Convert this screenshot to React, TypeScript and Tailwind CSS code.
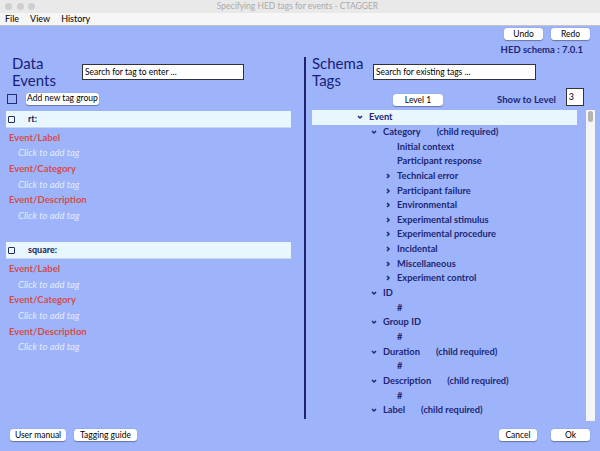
import React from "react";

type Node = { label: string; level: number; chevron?: "down" | "right"; note?: string; active?: boolean };

const tree: Node[] = [
  { label: "Event", level: 1, chevron: "down", active: true },
  { label: "Category", level: 2, chevron: "down", note: "(child required)" },
  { label: "Initial context", level: 3 },
  { label: "Participant response", level: 3 },
  { label: "Technical error", level: 3, chevron: "right" },
  { label: "Participant failure", level: 3, chevron: "right" },
  { label: "Environmental", level: 3, chevron: "right" },
  { label: "Experimental stimulus", level: 3, chevron: "right" },
  { label: "Experimental procedure", level: 3, chevron: "right" },
  { label: "Incidental", level: 3, chevron: "right" },
  { label: "Miscellaneous", level: 3, chevron: "right" },
  { label: "Experiment control", level: 3, chevron: "right" },
  { label: "ID", level: 2, chevron: "down" },
  { label: "#", level: 3 },
  { label: "Group ID", level: 2, chevron: "down" },
  { label: "#", level: 3 },
  { label: "Duration", level: 2, chevron: "down", note: "(child required)" },
  { label: "#", level: 3 },
  { label: "Description", level: 2, chevron: "down", note: "(child required)" },
  { label: "#", level: 3 },
  { label: "Label", level: 2, chevron: "down", note: "(child required)" },
];

const indent = ["pl-[45px]", "pl-[59px]", "pl-[73px]"];

function Chevron({ dir }: { dir: "down" | "right" }) {
  return (
    <svg width="6" height="6" viewBox="0 0 6 6" className="block">
      {dir === "down" ? (
        <polyline points="1,2 3,4 5,2" fill="none" stroke="#1e2675" strokeWidth="1.5" />
      ) : (
        <polyline points="2,1 4,3 2,5" fill="none" stroke="#1e2675" strokeWidth="1.5" />
      )}
    </svg>
  );
}

function MacButton({ label, className = "" }: { label: string; className?: string }) {
  return (
    <div
      className={`h-[12px] bg-white rounded-[3px] shadow-[0_0.5px_1px_rgba(0,0,0,0.35)] flex items-center justify-center text-[8.5px] text-black leading-none ${className}`}
    >
      {label}
    </div>
  );
}

function TagGroup({ name }: { name: string }) {
  const tags = ["Event/Label", "Event/Category", "Event/Description"];
  return (
    <div>
      <div className="ml-[6px] w-[285px] h-[17px] bg-[#e8f6fe] border-b border-[#c9d6f2] flex items-center">
        <div className="ml-[2px] w-[7px] h-[7px] border border-[#222a60] rounded-[1px] bg-white/40" />
        <span className="ml-[13px] text-[9px] font-bold text-[#141a50]">{name}</span>
      </div>
      <div className="mt-[2px]">
        {tags.map((t) => (
          <div key={t}>
            <div className="h-[15.7px] flex items-center pl-[9px] text-[9.5px] font-bold text-[#d44c4c]">{t}</div>
            <div className="h-[15.7px] flex items-center pl-[18px] text-[9.5px] italic text-[#e4eafa]">Click to add tag</div>
          </div>
        ))}
      </div>
    </div>
  );
}

export default function App() {
  return (
    <div className="w-[600px] h-[451px] flex flex-col overflow-hidden font-[family-name:Lato,sans-serif] bg-[#9db4fa]">
      {/* window title bar */}
      <div className="h-[13px] bg-[#e9e9e9] flex items-center">
        <div className="flex gap-[4.5px] ml-[5px]">
          <div className="w-[7px] h-[7px] rounded-full bg-[#cfcfcf]" />
          <div className="w-[7px] h-[7px] rounded-full bg-[#cfcfcf]" />
          <div className="w-[7px] h-[7px] rounded-full bg-[#cfcfcf]" />
        </div>
        <div className="flex-1 text-center text-[8.5px] text-[#a9a9a9] pr-[40px]">Specifying HED tags for events - CTAGGER</div>
      </div>
      {/* menu bar */}
      <div className="h-[13px] bg-[#f6f6f6] border-b border-[#c4c4c4] flex items-center text-[9px] text-black gap-[11px] pl-[5px]">
        <span>File</span>
        <span>View</span>
        <span>History</span>
      </div>

      <div className="flex-1 flex flex-col">
        <div className="h-[15px] pt-[2px] flex justify-end gap-[8px] pr-[10px]">
          <MacButton label="Undo" className="w-[39px]" />
          <MacButton label="Redo" className="w-[39px]" />
        </div>
        <div className="h-[14px] flex items-end justify-end pr-[17px] text-[9.5px] leading-[10px] font-bold text-[#1e2675]">
          HED schema : 7.0.1
        </div>

        <div className="h-[366px] flex">
          {/* left: data events */}
          <div className="w-[304px] flex flex-col">
            <div className="h-[37px] flex">
              <div className="w-[82px] pl-[12px] text-[15px] leading-[17px] text-[#1a2078]">
                <div>Data</div>
                <div>Events</div>
              </div>
              <div className="mt-[9px] w-[162px] h-[16px] bg-white border border-[#333] flex items-center pl-[2px] text-[8.5px] text-black">
                Search for tag to enter ...
              </div>
            </div>
            <div className="h-[13px] flex items-center">
              <div className="ml-[7px] w-[10px] h-[10px] border border-[#222a70]" />
              <MacButton label="Add new tag group" className="ml-[9px] w-[73px]" />
            </div>
            <div className="mt-[6px] flex flex-col gap-[18px]">
              <TagGroup name="rt:" />
              <TagGroup name="square:" />
            </div>
          </div>

          <div className="w-[2px] my-[2px] bg-[#1c2370]" />

          {/* right: schema tags */}
          <div className="flex-1 pl-[6px] flex flex-col">
            <div className="h-[33px] flex">
              <div className="w-[61px] text-[15px] leading-[17px] text-[#1a2078]">
                <div>Schema</div>
                <div>Tags</div>
              </div>
              <div className="mt-[9px] w-[163px] h-[16px] bg-white border border-[#333] flex items-center pl-[2px] text-[8.5px] text-black">
                Search for existing tags ...
              </div>
            </div>
            <div className="h-[19px] flex items-start">
              <MacButton label="Level 1" className="ml-[81px] mt-[6px] w-[50px]" />
              <span className="ml-[54px] mt-[5px] text-[9.5px] font-bold text-[#1e2675]">Show to Level</span>
              <div className="ml-[10px] w-[18px] h-[18px] bg-white border border-[#333] text-[9px] text-black pl-[2px] pt-[1px]">3</div>
            </div>
            <div className="mt-[3px] flex">
              <div className="w-[265px]">
                {tree.map((n, i) => (
                  <div
                    key={i}
                    className={`h-[14.65px] flex items-center text-[9.3px] font-bold text-[#1e2675] ${indent[n.level - 1]} ${n.active ? "bg-[#e8f6fe]" : ""}`}
                  >
                    <div className="w-[12px]">{n.chevron && <Chevron dir={n.chevron} />}</div>
                    <span>{n.label}</span>
                    {n.note && <span className="ml-[16px]">{n.note}</span>}
                  </div>
                ))}
              </div>
              <div className="ml-[9px] w-[9px] h-[311px] bg-[#f5f5f8] pt-[1px] flex justify-center">
                <div className="w-[5px] h-[11px] rounded-full bg-[#b3b3b3]" />
              </div>
            </div>
          </div>
        </div>

        <div className="mt-[8px] flex items-center px-[10px]">
          <MacButton label="User manual" className="w-[56px]" />
          <MacButton label="Tagging guide" className="ml-[8px] w-[63px]" />
          <div className="flex-1" />
          <MacButton label="Cancel" className="w-[38px]" />
          <MacButton label="Ok" className="ml-[14px] w-[39px]" />
        </div>
      </div>
    </div>
  );
}
